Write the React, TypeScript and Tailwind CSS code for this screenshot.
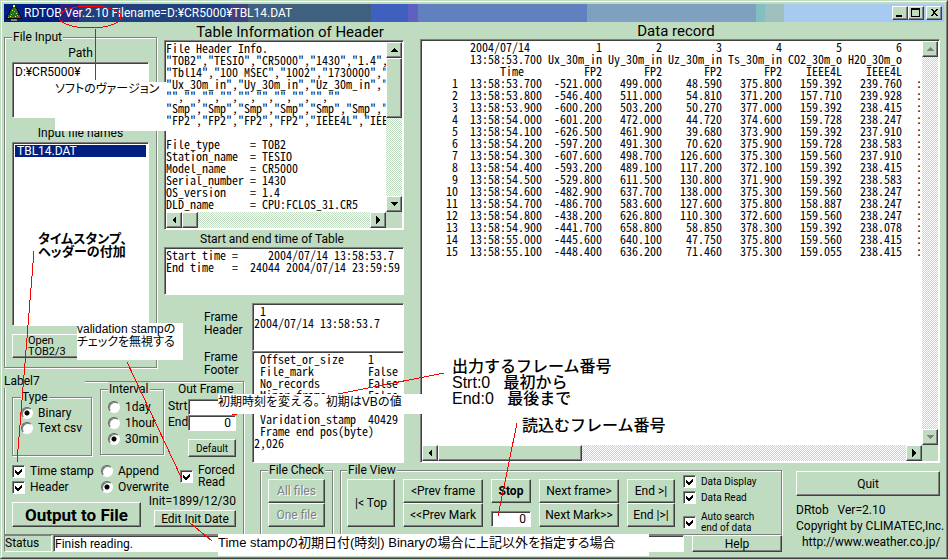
import { ReactNode } from "react";

const raised =
  "border border-t-white border-l-white border-r-[#404040] border-b-[#404040] bg-[#c0dcc0] shadow-[inset_-1px_-1px_0_#808080]";
const sunken =
  "border border-t-[#808080] border-l-[#808080] border-r-white border-b-white bg-white shadow-[inset_1px_1px_0_#404040]";
const etched =
  "border border-[#808080] shadow-[1px_1px_0_#fff,inset_1px_1px_0_#fff]";
const track =
  "bg-[repeating-conic-gradient(#fff_0_25%,#c0dcc0_0_50%)] bg-[length:2px_2px]";
const mono =
  "font-['Noto_Sans_Mono_CJK_JP','Liberation_Mono',monospace] text-[12px] leading-[12px]";

const headerInfo = `File Header Info.
"TOB2","TESIO","CR5000","1430","1.4","CPU:FCLOS_31.CR5"
"Tbl14","100 MSEC","1002","1730000","1"
"Ux_30m_in","Uy_30m_in","Uz_30m_in","Ts_30m_in"
"","","","","","","","","",""
"Smp","Smp","Smp","Smp","Smp","Smp","Smp"
"FP2","FP2","FP2","FP2","IEEE4L","IEEE4L"

File_type     = TOB2
Station_name  = TESIO
Model_name    = CR5000
Serial_number = 1430
OS_version    = 1.4
DLD_name      = CPU:FCLOS_31.CR5`;

const tableTimes = `Start time =     2004/07/14 13:58:53.7
End time   =  24044 2004/07/14 23:59:59`;

const frameFooter = ` Offset_or_size    1
 File_mark         False
 No_records        False
 Minor_frame       False

 Varidation_stamp  40429
 Frame end pos(byte)
2,026`;

const columns = [
  { no: 1, name: "Ux_30m_in", type: "FP2" },
  { no: 2, name: "Uy_30m_in", type: "FP2" },
  { no: 3, name: "Uz_30m_in", type: "FP2" },
  { no: 4, name: "Ts_30m_in", type: "FP2" },
  { no: 5, name: "CO2_30m_o", type: "IEEE4L" },
  { no: 6, name: "H2O_30m_o", type: "IEEE4L" },
];

const records = [
  ["13:58:53.700", "-521.000", "499.000", "48.590", "375.800", "159.392", "239.760"],
  ["13:58:53.800", "-546.400", "511.000", "54.810", "371.200", "157.710", "239.928"],
  ["13:58:53.900", "-600.200", "503.200", "50.270", "377.000", "159.392", "238.415"],
  ["13:58:54.000", "-601.200", "472.000", "44.720", "374.600", "159.728", "238.247"],
  ["13:58:54.100", "-626.500", "461.900", "39.680", "373.900", "159.392", "237.910"],
  ["13:58:54.200", "-597.200", "491.300", "70.620", "375.900", "159.728", "238.583"],
  ["13:58:54.300", "-607.600", "498.700", "126.600", "375.300", "159.560", "237.910"],
  ["13:58:54.400", "-593.200", "489.100", "117.200", "372.100", "159.392", "238.415"],
  ["13:58:54.500", "-529.800", "611.500", "130.800", "371.900", "159.392", "238.583"],
  ["13:58:54.600", "-482.900", "637.700", "138.000", "375.300", "159.560", "238.247"],
  ["13:58:54.700", "-486.700", "583.600", "127.600", "375.800", "158.887", "238.247"],
  ["13:58:54.800", "-438.200", "626.800", "110.300", "372.600", "159.560", "238.247"],
  ["13:58:54.900", "-441.700", "658.800", "58.850", "378.300", "159.392", "238.078"],
  ["13:58:55.000", "-445.600", "640.100", "47.750", "375.800", "159.560", "238.415"],
  ["13:58:55.100", "-448.400", "636.200", "71.460", "375.300", "159.055", "238.415"],
];

const arrows = {
  up: "M4 0L8 4H0Z",
  down: "M0 0H8L4 4Z",
  left: "M4 0V8L0 4Z",
  right: "M0 0L4 4L0 8Z",
};

function ScrollButton({ dir, disabled }: { dir: keyof typeof arrows; disabled?: boolean }) {
  const vertical = dir === "up" || dir === "down";
  return (
    <button
      aria-label={`Scroll ${dir}`}
      disabled={disabled}
      className={`flex size-4 shrink-0 items-center justify-center text-black disabled:text-[#808080] ${raised}`}
    >
      <svg
        width={vertical ? 8 : 4}
        height={vertical ? 4 : 8}
        fill="currentColor"
        shapeRendering="crispEdges"
      >
        <path d={arrows[dir]} />
      </svg>
    </button>
  );
}

function Check({ className, children }: { className?: string; children: ReactNode }) {
  return (
    <label className={`flex items-center ${className ?? ""}`}>
      <span className="relative mr-[5px] flex shrink-0">
        <input type="checkbox" defaultChecked className={`peer size-[13px] appearance-none ${sunken}`} />
        <svg
          viewBox="0 0 13 13"
          shapeRendering="crispEdges"
          className="pointer-events-none absolute inset-0 hidden size-[13px] peer-checked:block"
        >
          <path d="M3 5v3l2 2h1l4-4V3L6 7H5L3 5Z" />
        </svg>
      </span>
      {children}
    </label>
  );
}

function Radio({ name, checked, children }: { name: string; checked?: boolean; children: ReactNode }) {
  return (
    <label className="flex items-center gap-[5px]">
      <input
        type="radio"
        name={name}
        defaultChecked={checked}
        className="size-3 shrink-0 appearance-none rounded-full border border-t-[#606060] border-l-[#606060] border-r-white border-b-white bg-white shadow-[inset_1px_1px_0_#808080] checked:bg-[radial-gradient(circle,#000_2px,#fff_3px)]"
      />
      {children}
    </label>
  );
}

function Group({ title, className, children }: { title: string; className?: string; children: ReactNode }) {
  return (
    <fieldset className={`${etched} ${className ?? ""}`}>
      <legend className="bg-[#c0dcc0] px-px leading-[14px] whitespace-nowrap">{title}</legend>
      {children}
    </fieldset>
  );
}

function Tree() {
  return (
    <svg width="16" height="16" viewBox="0 0 16 16" shapeRendering="crispEdges">
      <path d="M7 0H9V2H10V3H11V4H12V6H13V8H14V9H13V10H15V12H16V14H0V12H1V10H3V9H2V8H3V6H4V4H5V3H6V2H7Z" fill="#000" />
      <path d="M7 2H9V3H10V4H11V6H12V8H13V9H12V10H14V12H15V13H1V12H2V10H4V9H3V8H4V6H5V4H6V3H7Z" fill="#207020" />
      <path d="M5 14H11V16H5Z" fill="#808080" />
      <path d="M7 0H9V2H7ZM6 5H7V6H6ZM10 8H11V9H10ZM4 11H5V12H4ZM9 11H10V12H9Z" fill="#ff0" />
      <path d="M9 4H10V5H9ZM7 8H8V9H7ZM12 11H13V12H12ZM6 12H7V13H6Z" fill="#f04040" />
      <path d="M8 6H9V7H8ZM5 9H6V10H5ZM11 10H12V11H11ZM2 12H3V13H2Z" fill="#0ff" />
    </svg>
  );
}

function TitleBar() {
  return (
    <header className="flex h-[18px] items-center bg-[linear-gradient(90deg,#002080_6%,#282080_6%_8%,#204080_8%_24%,#404080_24%_26%,#406080_26%_39%,#4060c0_39%_43%,#6060c0_43%_44%,#6080c0_44%_62%,#80a0c0_62%_80%,#80c0c0_80%_81%,#a0c0c0_81%_83%,#a6caf0_83%)] px-0.5">
      <Tree />
      <h1 className="ml-0.5 flex-1 whitespace-nowrap text-white">
        RDTOB Ver.2.10 Filename=D:¥CR5000¥TBL14.DAT
      </h1>
      <button aria-label="Minimize" className={`h-3.5 w-4 ${raised}`}>
        <svg width="14" height="12" shapeRendering="crispEdges">
          <path d="M3 8H9V10H3Z" />
        </svg>
      </button>
      <button aria-label="Maximize" className={`h-3.5 w-4 ${raised}`}>
        <svg width="14" height="12" shapeRendering="crispEdges">
          <path d="M2 1H11V10H2ZM3 3V9H10V3Z" fillRule="evenodd" />
        </svg>
      </button>
      <button aria-label="Close" className={`ml-0.5 h-3.5 w-4 ${raised}`}>
        <svg width="14" height="12" shapeRendering="crispEdges">
          <path d="M3 2H5L7 4L9 2H11L8 5V6L11 9H9L7 7L5 9H3L6 6V5Z" />
        </svg>
      </button>
    </header>
  );
}

function FileInput() {
  return (
    <Group title="File Input" className="row-span-2 mt-2 mr-[7px] mb-2.5 px-[7px]">
      <label htmlFor="path" className="mt-0.5 block text-center leading-[14px]">
        Path
      </label>
      <textarea
        id="path"
        readOnly
        defaultValue="D:¥CR5000¥"
        className={`mt-0.5 block h-14 w-full resize-none overflow-hidden px-0.5 pt-0.5 leading-[14px] ${sunken}`}
      />
      <label htmlFor="files" className="mt-2 block text-center leading-[14px]">
        Input file names
      </label>
      <ul id="files" role="listbox" className={`mt-0.5 h-[184px] p-0.5 ${sunken}`}>
        <li role="option" aria-selected="true" className="bg-[#002080] pl-0.5 leading-[12px] text-white">
          TBL14.DAT
        </li>
      </ul>
      <button className={`mt-2 w-[76px] pr-3 pl-[15px] text-left text-[11px] leading-[11px] ${raised}`}>
        Open TOB2/3
      </button>
    </Group>
  );
}

function TableInfo() {
  return (
    <section className="col-span-2 mr-4">
      <h2 className="mt-0.5 pl-3 text-center text-[15px] leading-[16px]">Table Information of Header</h2>
      <div className={`flex h-[190px] flex-col p-px ${sunken}`}>
        <div className="flex flex-1">
          <textarea
            aria-label="Table information"
            readOnly
            wrap="off"
            defaultValue={headerInfo}
            className={`flex-1 resize-none overflow-hidden ${mono}`}
          />
          <div className={`flex w-4 flex-col ${track}`}>
            <ScrollButton dir="up" />
            <div className={`h-[60px] ${raised}`} />
            <div className="flex-1" />
            <ScrollButton dir="down" />
          </div>
        </div>
        <div className="flex h-4 bg-[#c0dcc0] pr-4">
          <ScrollButton dir="left" />
          <div className={`w-4 ${raised}`} />
          <div className={`flex-1 ${track}`} />
          <ScrollButton dir="right" />
        </div>
      </div>
      <label htmlFor="times" className="mt-0.5 block pr-6 text-center leading-[14px]">
        Start and end time of Table
      </label>
      <textarea
        id="times"
        readOnly
        wrap="off"
        defaultValue={tableTimes}
        className={`mt-px block h-12 w-full resize-none overflow-hidden pt-px pl-px ${mono} ${sunken}`}
      />
    </section>
  );
}

function Frames() {
  return (
    <section className="row-span-2 mr-4 flex flex-col">
      <textarea
        id="frameHeader"
        readOnly
        wrap="off"
        defaultValue={" 1\n2004/07/14 13:58:53.7"}
        className={`h-12 resize-none overflow-hidden pt-px pl-px ${mono} ${sunken}`}
      />
      <textarea
        id="frameFooter"
        readOnly
        wrap="off"
        defaultValue={frameFooter}
        className={`flex-1 resize-none overflow-hidden pt-px pl-px ${mono} ${sunken}`}
      />
    </section>
  );
}

function DataRecord() {
  return (
    <section className="row-span-3 mr-1 flex flex-col">
      <h2 className="mt-0.5 pr-2 text-center text-[15px] leading-[15px]">Data record</h2>
      <div className={`flex flex-1 flex-col p-px ${sunken}`}>
        <div className="flex flex-1">
          <div className="w-0 flex-1 overflow-hidden">
            <table className={`w-[500px] table-fixed text-right ${mono}`}>
              <colgroup>
                <col className="w-9" />
                <col className="w-[84px]" />
                {columns.map((c) => (
                  <col key={c.no} className="w-[60px]" />
                ))}
                <col />
              </colgroup>
              <thead>
                <tr>
                  <td />
                  <td className="pr-3">2004/07/14</td>
                  {columns.map((c) => (
                    <td key={c.no}>{c.no}</td>
                  ))}
                  <td />
                </tr>
                <tr>
                  <td />
                  <td>13:58:53.700</td>
                  {columns.map((c) => (
                    <td key={c.no}>{c.name}</td>
                  ))}
                  <td />
                </tr>
                <tr>
                  <td />
                  <th className="pr-[18px] text-right font-normal">Time</th>
                  {columns.map((c) => (
                    <td key={c.no}>{c.type}</td>
                  ))}
                  <td />
                </tr>
              </thead>
              <tbody>
                {records.map((row, i) => (
                  <tr key={i}>
                    <td>{i + 1}</td>
                    {row.map((value, j) => (
                      <td key={j}>{value}</td>
                    ))}
                    <td>:</td>
                  </tr>
                ))}
              </tbody>
            </table>
          </div>
          <div className={`flex w-4 flex-col justify-between ${track}`}>
            <ScrollButton dir="up" disabled />
            <ScrollButton dir="down" disabled />
          </div>
        </div>
        <div className="flex h-4 bg-[#c0dcc0] pr-4">
          <ScrollButton dir="left" />
          <div className={`w-36 ${raised}`} />
          <div className={`flex-1 ${track}`} />
          <ScrollButton dir="right" />
        </div>
      </div>
    </section>
  );
}

function OutputPanel() {
  return (
    <fieldset className={`col-span-2 row-span-2 -mt-1 mr-2 px-[7px] ${etched}`}>
      <legend className="-ml-2 w-[81px] bg-[#c0dcc0] leading-[14px]">Label7</legend>
      <div className="flex items-start">
        <Group title="Type" className="mt-0.5 h-[66px] w-20 px-2">
          <div className="mt-0.5 flex flex-col gap-px leading-[14px]">
            <Radio name="type" checked>Binary</Radio>
            <Radio name="type">Text csv</Radio>
          </div>
        </Group>
        <Group title="Interval" className="-mt-1.5 ml-2 h-[73px] w-16 pl-[7px]">
          <div className="mt-1 flex flex-col gap-0.5 leading-[14px]">
            <Radio name="interval">1day</Radio>
            <Radio name="interval">1hour</Radio>
            <Radio name="interval" checked>30min</Radio>
          </div>
        </Group>
        <div className="-mt-1.5 ml-1 flex flex-1 flex-col">
          <div className="pl-2.5 leading-[14px] whitespace-nowrap">Out Frame</div>
          <label className="mt-[3px] flex leading-[14px]">
            <span className="w-5 shrink-0">Strt</span>
            <input defaultValue="0" className={`h-4 w-12 px-1 text-right ${sunken}`} />
          </label>
          <label className="flex leading-[14px]">
            <span className="w-5 shrink-0">End</span>
            <input defaultValue="0" className={`h-4 w-12 px-1 text-right ${sunken}`} />
          </label>
          <button className={`mt-2 ml-5 h-[18px] w-12 text-[10px] ${raised}`}>Default</button>
        </div>
      </div>
      <div className="mt-[7px] flex h-[30px] items-start leading-[14px]">
        <div className="w-[89px] space-y-0.5">
          <Check>Time stamp</Check>
          <Check>Header</Check>
        </div>
        <div className="w-[79px] space-y-0.5">
          <Radio name="mode">Append</Radio>
          <Radio name="mode" checked>Overwrite</Radio>
        </div>
        <Check className="leading-[12px]">
          <span>
            Forced
            <br />
            Read
          </span>
        </Check>
      </div>
      <div className="flex items-end justify-between">
        <button className={`h-[25px] w-[129px] text-[17px] leading-[20px] font-bold ${raised}`}>
          Output to File
        </button>
        <div>
          <div className="mb-0.5 text-right leading-[14px]">Init=1899/12/30</div>
          <button className={`ml-auto block h-[17px] w-[82px] leading-[14px] ${raised}`}>
            Edit Init Date
          </button>
        </div>
      </div>
    </fieldset>
  );
}

function Controls() {
  return (
    <section className="col-span-2 mr-1 flex pl-2">
      <Group title="File Check" className="w-[73px] px-[7px]">
        <div className="mt-0.5 flex flex-col text-[#808080]">
          <button disabled className={`h-6 [text-shadow:1px_1px_#fff] ${raised}`}>All files</button>
          <button disabled className={`h-6 [text-shadow:1px_1px_#fff] ${raised}`}>One file</button>
        </div>
      </Group>
      <Group title="File View" className="ml-[7px] flex-1 px-1.5">
        <div className="mt-0.5 flex items-start gap-2">
          <button className={`h-12 w-12 ${raised}`}>|&lt; Top</button>
          <div className="flex w-20 flex-col">
            <button className={`h-6 ${raised}`}>&lt;Prev frame</button>
            <button className={`h-6 ${raised}`}>&lt;&lt;Prev Mark</button>
          </div>
          <div className="flex h-12 w-10 flex-col justify-between">
            <button className={`h-6 font-bold ${raised}`}>Stop</button>
            <input
              aria-label="Frame number"
              defaultValue="0"
              className={`h-4 w-full px-1 text-right ${sunken}`}
            />
          </div>
          <div className="flex w-20 flex-col">
            <button className={`h-6 ${raised}`}>Next frame&gt;</button>
            <button className={`h-6 ${raised}`}>Next Mark&gt;&gt;</button>
          </div>
          <div className="flex w-12 flex-col">
            <button className={`h-6 ${raised}`}>End &gt;|</button>
            <button className={`h-6 ${raised}`}>End |&gt;|</button>
          </div>
          <div className="-mt-1 flex flex-col gap-[3px] text-[10px] leading-[11px]">
            <Check>Data Display</Check>
            <Check>Data Read</Check>
            <Check className="mt-1">
              <span>
                Auto search
                <br />
                end of data
              </span>
            </Check>
          </div>
        </div>
      </Group>
      <div className="ml-3.5 w-36 pt-2">
        <button className={`h-[25px] w-full ${raised}`}>Quit</button>
        <p className="mt-1.5 leading-[16px] whitespace-pre">DRtob   Ver=2.10</p>
        <p className="leading-[16px] whitespace-nowrap">Copyright by CLIMATEC,Inc.</p>
      </div>
    </section>
  );
}

function StatusBar() {
  return (
    <footer className="col-span-4 mr-1 flex h-[17px] leading-[14px]">
      <label
        htmlFor="status"
        className="w-12 border border-t-[#808080] border-l-[#808080] border-r-white border-b-white"
      >
        Status
      </label>
      <input
        id="status"
        readOnly
        defaultValue="Finish reading."
        className={`ml-px flex-1 px-px ${sunken}`}
      />
      <button className={`ml-2 w-[90px] ${raised}`}>Help</button>
      <a href="http://www.weather.co.jp/" className="ml-3.5 w-36 pl-1.5">
        http://www.weather.co.jp/
      </a>
    </footer>
  );
}

// handwritten notes laid over the window
function Notes() {
  return (
    <div className="pointer-events-none absolute -inset-px font-['Liberation_Sans','Noto_Sans_CJK_JP',sans-serif]">
      <svg className="absolute top-0 left-0" width="948" height="559" fill="none" stroke="#f00" shapeRendering="crispEdges">
        <path d="M232 415L444 373" />
      </svg>
      <p className="absolute top-[82px] left-[55px] h-[49px] w-28 bg-white leading-[14px] whitespace-nowrap [font-feature-settings:'palt']">
        ソフトのヴァージョン
      </p>
      <p className="absolute top-[232px] left-[38px] text-[13px] leading-[13px] font-bold whitespace-nowrap [font-feature-settings:'palt']">
        タイムスタンプ、
        <br />
        ヘッダーの付加
      </p>
      <p className="absolute top-[323px] left-[77px] h-[37px] w-[106px] bg-white leading-[13px] whitespace-nowrap [font-feature-settings:'palt']">
        validation stampの
        <br />
        チェックを無視する
      </p>
      <p className="absolute top-[394px] left-[218px] h-5 w-[205px] bg-white leading-[16px] whitespace-nowrap">
        初期時刻を変える。初期はVBの値
      </p>
      <p className="absolute top-[359px] left-[452px] text-[16px] leading-[16px] font-medium whitespace-pre">
        出力するフレーム番号
        <br />
        Strt:0   最初から
        <br />
        End:0   最後まで
      </p>
      <p className="absolute top-[418px] left-[522px] text-[16px] leading-[16px] font-medium whitespace-nowrap">
        読込むフレーム番号
      </p>
      <p className="absolute top-[534px] left-[218px] h-[22px] w-[431px] bg-white text-[13px] leading-[18px] whitespace-nowrap [font-feature-settings:'palt']">
        Time stampの初期日付(時刻) Binaryの場合に上記以外を指定する場合
      </p>
      <svg className="absolute top-0 left-0" width="948" height="559" fill="none" stroke="#f00" shapeRendering="crispEdges">
        <ellipse cx="90" cy="17" rx="31" ry="11" />
        <path d="M95 29V80M34 251L17 462M127 362L181 477M517 423L498 516M190 523L212 541" />
      </svg>
    </div>
  );
}

export default function App() {
  return (
    <div className="relative flex min-h-screen flex-col border border-t-[#c0dcc0] border-l-[#c0dcc0] border-r-[#404040] border-b-[#404040] bg-[#c0dcc0] font-['Roboto','Noto_Sans_CJK_JP',sans-serif] text-[12px] text-black">
      <div className="flex flex-1 flex-col border border-t-white border-l-white border-r-[#808080] border-b-[#808080] p-0.5">
        <TitleBar />
        <main className="grid grid-cols-[160px_88px_168px_minmax(0,1fr)] grid-rows-[281px_75px_85px_72px_auto]">
          <FileInput />
          <TableInfo />
          <DataRecord />
          <div className="col-start-2 row-start-2 pt-2 pl-10 leading-[13px]">
            <label htmlFor="frameHeader" className="block w-10">Frame Header</label>
            <label htmlFor="frameFooter" className="mt-3.5 block w-10">Frame Footer</label>
          </div>
          <Frames />
          <OutputPanel />
          <Controls />
          <StatusBar />
        </main>
      </div>
      <Notes />
    </div>
  );
}
